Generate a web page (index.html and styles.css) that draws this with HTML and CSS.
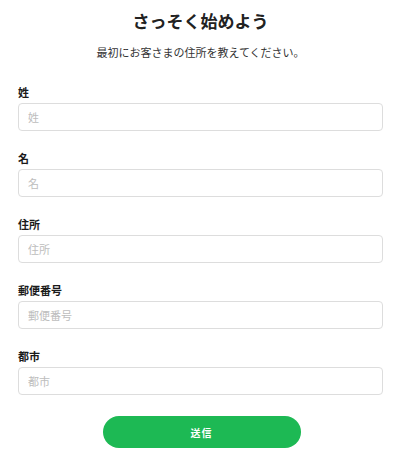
FILE: index.html
```html
<!DOCTYPE html>
<html lang="ja">
<head>
<meta charset="utf-8">
<link rel="stylesheet" href="styles.css">
</head>
<body>
<main class="page">
  <h1 class="title">さっそく始めよう</h1>
  <p class="subtitle">最初にお客さまの住所を教えてください。</p>
  <form class="form">
    <label class="field">
      <span class="label">姓</span>
      <input class="input" type="text" placeholder="姓">
    </label>
    <label class="field">
      <span class="label">名</span>
      <input class="input" type="text" placeholder="名">
    </label>
    <label class="field">
      <span class="label">住所</span>
      <input class="input" type="text" placeholder="住所">
    </label>
    <label class="field">
      <span class="label">郵便番号</span>
      <input class="input" type="text" placeholder="郵便番号">
    </label>
    <label class="field">
      <span class="label">都市</span>
      <input class="input" type="text" placeholder="都市">
    </label>
    <div class="actions">
      <button class="submit" type="button">送信</button>
    </div>
  </form>
</main>
</body>
</html>
```

FILE: styles.css
```css
* { box-sizing: border-box; }
html, body {
  margin: 0;
  padding: 0;
  background: #ffffff;
}
body {
  font-family: "Noto Sans CJK JP", "Noto Sans", sans-serif;
  color: #222222;
}
.page {
  padding: 9px 17px 0 18px;
}
.title {
  margin: 0;
  font-size: 17px;
  line-height: 24px;
  font-weight: 700;
  text-align: center;
}
.subtitle {
  margin: 11px 0 0;
  font-size: 11px;
  line-height: 16px;
  text-align: center;
  color: #333333;
}
.form {
  margin-top: 24px;
  display: flex;
  flex-direction: column;
  gap: 19px;
}
.field {
  display: flex;
  flex-direction: column;
  gap: 3px;
}
.label {
  font-size: 11px;
  line-height: 16px;
  font-weight: 700;
  color: #1a1a1a;
}
.input {
  height: 28px;
  width: 100%;
  border: 1px solid #dddddd;
  border-radius: 4px;
  padding: 0 9px;
  font-family: inherit;
  font-size: 11px;
  color: #222;
  background: #fff;
  outline: none;
}
.input::placeholder {
  color: #bdbdbd;
}
.actions {
  display: flex;
  justify-content: center;
  margin-top: 2px;
  padding-left: 2px;
}
.submit {
  width: 198px;
  height: 32px;
  border: none;
  border-radius: 16px;
  background: #1db954;
  color: #ffffff;
  font-family: inherit;
  font-size: 10px;
  font-weight: 700;
  letter-spacing: 1px;
}
```
